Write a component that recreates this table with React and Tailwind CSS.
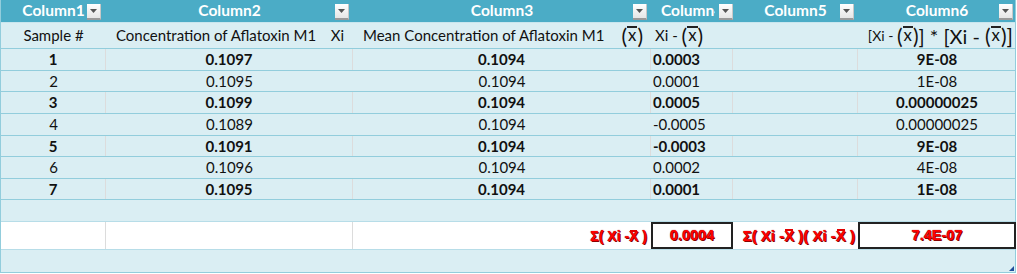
import React from "react";

const Btn = ({ cls }) => (
  <div className={"absolute top-[4px] w-[14px] h-[16px] bg-gradient-to-b from-[#ffffff] to-[#e6e6e6] border-b-2 border-b-[#9a9a9a] border-r border-r-[#c8c8c8] flex items-center justify-center " + cls}>
    <svg width="7" height="4" viewBox="0 0 7 4"><path d="M0 0 L7 0 L3.5 4 Z" fill="#555" /></svg>
  </div>
);

const Xbar = ({ cls = "" }) => (
  <span className={"inline-flex items-center " + cls}>
    <span>(</span>
    <span className="relative text-[0.8em] px-[1px] leading-none">
      <span className="absolute left-0 right-0 top-[-1px] h-[1.5px] bg-[#222]"></span>x
    </span>
    <span>)</span>
  </span>
);

const rows = [
  ["1", "0.1097", "0.1094", "0.0003", "9E-08", true, "h-[22px]"],
  ["2", "0.1095", "0.1094", "0.0001", "1E-08", false, "h-[21px]"],
  ["3", "0.1099", "0.1094", "0.0005", "0.00000025", true, "h-[22px]"],
  ["4", "0.1089", "0.1094", "-0.0005", "0.00000025", false, "h-[22px]"],
  ["5", "0.1091", "0.1094", "-0.0003", "9E-08", true, "h-[21px]"],
  ["6", "0.1096", "0.1094", "0.0002", "4E-08", false, "h-[22px]"],
  ["7", "0.1095", "0.1094", "0.0001", "1E-08", true, "h-[21px]"],
];

const grid = "grid grid-cols-[105px_247px_298px_82px_125px_158px]";

const XbarRed = () => (
  <span className="relative inline-block">
    <span className="absolute left-[1px] right-[1px] top-[1px] h-[2px] bg-[#e00000]"></span>X
  </span>
);

const redText = "text-[#ff0000] font-bold [text-shadow:1px_1px_0_#8b0000,0_0_1px_#8b0000] font-['Liberation_Sans',Arial,sans-serif]";

export default function App() {
  return (
    <div className="w-[1017px] h-[274px] bg-white font-['Lato',sans-serif] text-[15px] text-[#111]">
      <div className="w-[1016px] border-l border-r border-b border-[#92CDDC]">
        {/* title row */}
        <div className={grid + " h-[22px] bg-[#4BACC6] text-white font-bold text-[15.5px]"}>
          {["Column1", "Column2", "Column3", "Column4", "Column5", "Column6"].map((c, i) =>
            i === 3 ? (
              <div key={c} className="relative flex items-center leading-none">
                <div className="w-[54px] ml-[10px] overflow-hidden whitespace-nowrap">{c}</div>
                <Btn cls="right-[0px]" />
              </div>
            ) : (
              <div key={c} className="relative flex items-center justify-center overflow-hidden leading-none">
                <span>{c}</span>
                <Btn cls={i === 0 ? "right-[5px]" : i === 5 ? "right-[3px]" : "right-[4px]"} />
              </div>
            )
          )}
        </div>
        {/* subheader */}
        <div className={grid + " h-[27px] bg-[#DAEEF3] border-t border-t-[#c9e6ee] border-b border-b-[#92CDDC] leading-none"}>
          <div className="flex items-center justify-center">Sample #</div>
          <div className="flex items-center justify-between pl-[10px] pr-[9px]">
            <span>Concentration of Aflatoxin M1</span>
            <span>Xi</span>
          </div>
          <div className="flex items-center justify-between pl-[10px] pr-[8px]">
            <span>Mean Concentration of Aflatoxin M1</span>
            <Xbar cls="text-[21px]" />
          </div>
          <div className="flex items-center pl-[4px]">
            <span>Xi -&nbsp;</span>
            <Xbar cls="text-[21px]" />
          </div>
          <div></div>
          <div className="flex items-center justify-end pr-[3px] whitespace-nowrap">
            <span className="text-[14px]">[Xi -&nbsp;</span>
            <Xbar cls="text-[21px]" />
            <span className="text-[20px]">]&nbsp;*&nbsp;[Xi -&nbsp;</span>
            <Xbar cls="text-[21px]" />
            <span className="text-[21px]">]</span>
          </div>
        </div>
        {rows.map(([a, b, c, d, e, bold, h]) => (
          <div key={a} className={grid + " " + h + " bg-[#DAEEF3] border-b border-b-[#92CDDC] leading-none " + (bold ? "font-bold" : "")}>
            <div className={"flex items-center justify-center " + (bold ? "border-r border-r-[#dcdcdc]" : "")}>{a}</div>
            <div className={"flex items-center justify-center " + (bold ? "border-r border-r-[#dcdcdc]" : "")}>{b}</div>
            <div className={"flex items-center justify-center " + (bold ? "border-r border-r-[#dcdcdc]" : "")}>{c}</div>
            <div className={"flex items-center pl-[2px] " + (bold ? "border-r border-r-[#dcdcdc]" : "")}>{d}</div>
            <div className={bold ? "border-r border-r-[#dcdcdc]" : ""}></div>
            <div className="flex items-center justify-center">{e}</div>
          </div>
        ))}
        {/* empty row */}
        <div className="h-[22px] bg-[#DAEEF3] border-b border-b-[#b7dde8]"></div>
        {/* totals row */}
        <div className={grid + " h-[28px] bg-white border-b border-b-[#b7dde8] leading-none"}>
          <div className="border-r border-r-[#dcdcdc]"></div>
          <div className="border-r border-r-[#dcdcdc]"></div>
          <div className={"flex items-center justify-end pr-[4px] text-[14px] " + redText}>
            <span>Σ( Xi -<XbarRed /> )</span>
          </div>
          <div className={"flex items-center justify-center border-2 border-[#222] text-[14.5px] " + redText}>0.0004</div>
          <div className={"flex items-center justify-end pr-[3px] text-[15px] whitespace-nowrap " + redText}>
            <span>Σ( Xi -<XbarRed /> )( Xi -<XbarRed /> )</span>
          </div>
          <div className={"flex items-center justify-center border-2 border-[#222] text-[14.5px] " + redText}>7.4E-07</div>
        </div>
        {/* last row */}
        <div className="relative h-[22px] bg-[#DAEEF3]">
          <div className="absolute right-[1px] bottom-[1px] w-[5px] h-[5px] bg-[#1f4e9c] [clip-path:polygon(100%_0,100%_100%,0_100%)]"></div>
        </div>
      </div>
    </div>
  );
}
